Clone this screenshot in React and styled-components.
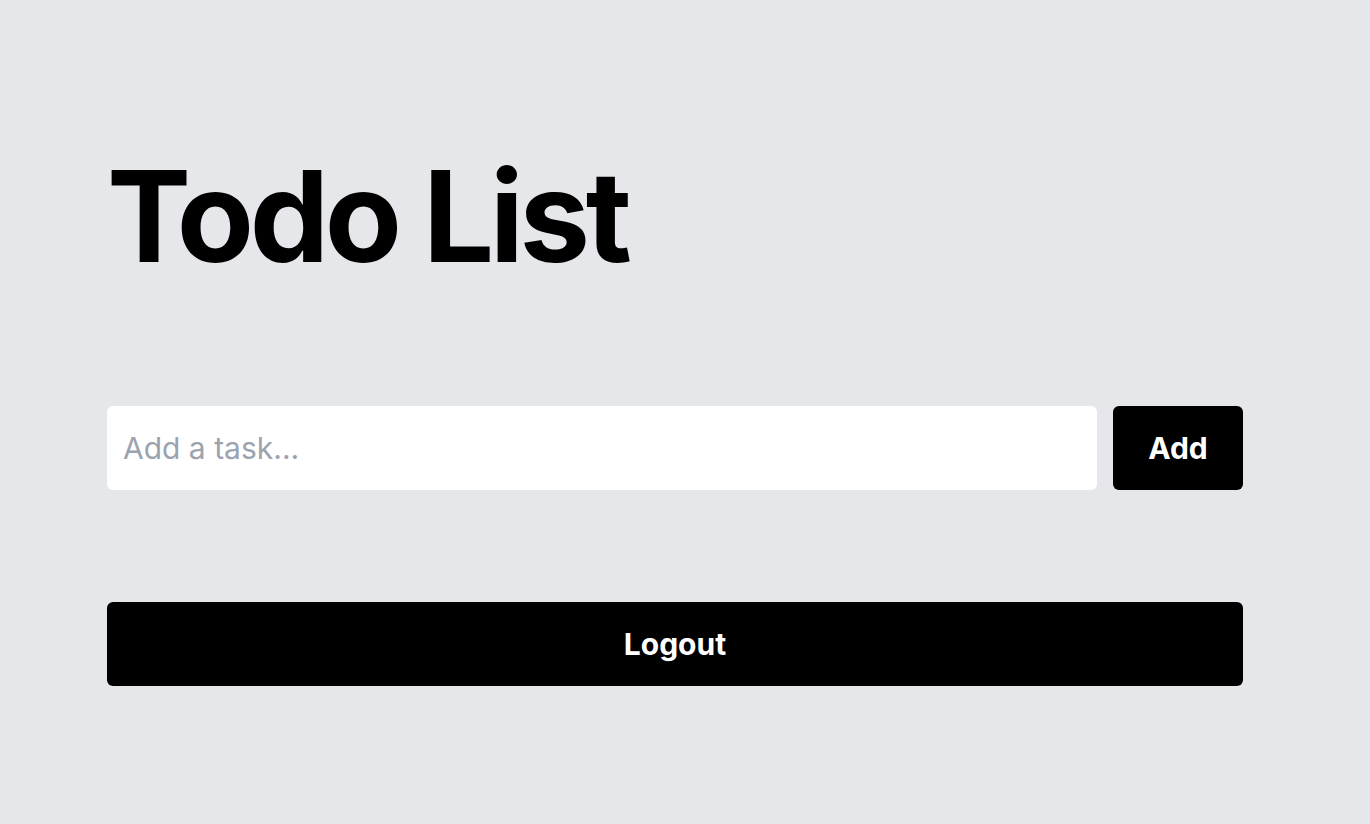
import React, { useState } from "react";
import styled, { createGlobalStyle } from "styled-components";

const GlobalStyle = createGlobalStyle`
    html, body {
        margin: 0;
        padding: 0;
        background-color: #e5e7eb;
        font-family: Inter, "Liberation Sans", sans-serif;
    }
    * {
        box-sizing: border-box;
    }
`;

const Page = styled.div`
    min-height: 824px;
    padding: 153px 0 0 107px;
    background-color: #e5e7eb;
`;

const Container = styled.div`
    width: 1136px;
`;

const Title = styled.h1`
    margin: 0;
    height: 126px;
    font-size: 126px;
    line-height: 1;
    font-weight: 700;
    letter-spacing: -0.035em;
    color: #000;
`;

const Form = styled.form`
    display: flex;
    gap: 16px;
    margin-top: 127px;
`;

const Input = styled.input`
    flex: 1;
    height: 84px;
    padding: 0 16px;
    border: none;
    border-radius: 6px;
    background-color: white;
    font-family: inherit;
    font-size: 30px;
    color: #111827;
    outline: none;
    &::placeholder {
        color: #9ca3af;
    }
`;

const Button = styled.button`
    height: 84px;
    width: ${props => (props.full ? "100%" : "130px")};
    border: none;
    border-radius: 6px;
    background-color: #000;
    color: white;
    font-family: inherit;
    font-size: 30px;
    font-weight: 700;
    cursor: pointer;
`;

const LogoutRow = styled.div`
    margin-top: 112px;
`;

export default function App() {
    const [task, setTask] = useState("");

    return (
        <Page>
            <GlobalStyle />
            <Container>
                <Title>Todo List</Title>
                <Form onSubmit={e => e.preventDefault()}>
                    <Input
                        type="text"
                        placeholder="Add a task..."
                        value={task}
                        onChange={e => setTask(e.target.value)}
                    />
                    <Button type="submit">Add</Button>
                </Form>
                <LogoutRow>
                    <Button full>Logout</Button>
                </LogoutRow>
            </Container>
        </Page>
    );
}
